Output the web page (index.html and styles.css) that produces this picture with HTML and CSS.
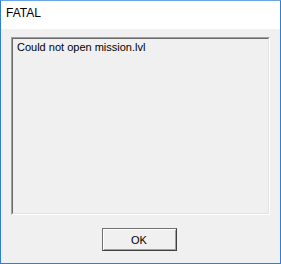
FILE: index.html
```html
<!DOCTYPE html>
<html>
<head>
<meta charset="utf-8">
<link rel="stylesheet" href="styles.css">
</head>
<body>
<div class="win">
  <div class="titlebar">FATAL</div>
  <div class="content">
    <div class="panel">
      <div class="panel-inner">Could not open mission.lvl</div>
    </div>
    <div class="actions">
      <button class="btn">OK</button>
    </div>
  </div>
</div>
</body>
</html>
```
FILE: styles.css
```css
html, body {
  margin: 0;
  padding: 0;
  background: #f0f0f0;
}
.win {
  width: 281px;
  height: 264px;
  box-sizing: border-box;
  border: 1px solid #2f7fd6;
  border-top-color: #6aa5e3;
  display: flex;
  flex-direction: column;
  font-family: "Liberation Sans", Arial, sans-serif;
  color: #000;
}
.titlebar {
  height: 28px;
  background: #fff;
  font-size: 12px;
  line-height: 24px;
  padding-left: 5px;
  flex: none;
}
.content {
  flex: 1;
  background: #f0f0f0;
  padding: 8px 10px 0 10px;
  display: flex;
  flex-direction: column;
}
.panel {
  height: 178px;
  box-sizing: border-box;
  border: 1px solid;
  border-color: #a0a0a0 #ffffff #ffffff #a0a0a0;
  flex: none;
}
.panel-inner {
  height: 100%;
  box-sizing: border-box;
  border: 1px solid;
  border-color: #696969 #e3e3e3 #e3e3e3 #696969;
  font-size: 11px;
  line-height: 13px;
  padding: 2px 4px;
}
.actions {
  display: flex;
  justify-content: center;
  padding-top: 13px;
  padding-right: 3px;
}
.btn {
  width: 75px;
  height: 23px;
  box-sizing: border-box;
  background: #f0f0f0;
  border: 1px solid;
  border-color: #707070 #404040 #404040 #707070;
  box-shadow: inset 1px 1px 0 #ffffff, inset -1px -1px 0 #a0a0a0;
  font-family: "Liberation Sans", Arial, sans-serif;
  font-size: 11px;
  color: #000;
  padding: 0;
  margin: 0;
}
```
